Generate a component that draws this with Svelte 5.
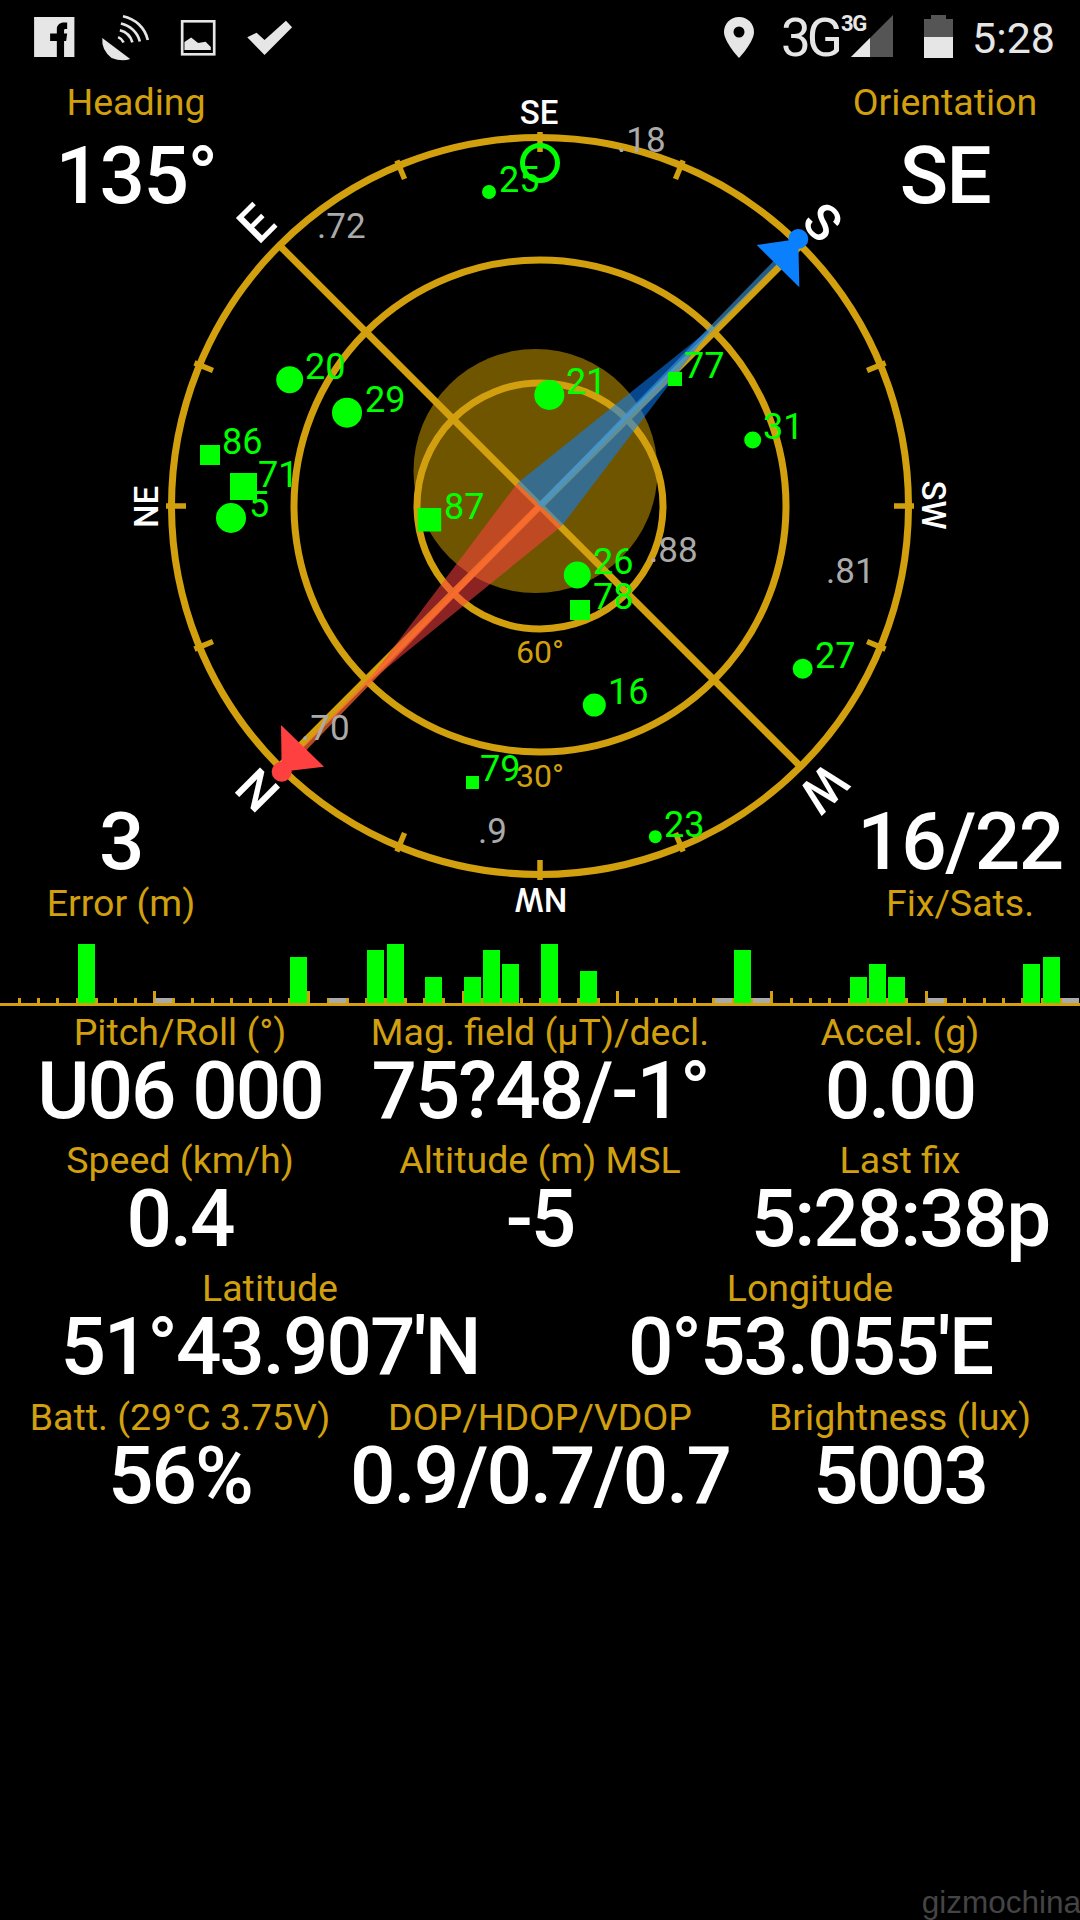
<script>
  const cx = 540, cy = 506;
  const cards = [
    { t: 'SE', a: 0, small: true }, { t: 'S', a: 45 }, { t: 'SW', a: 90, small: true }, { t: 'W', a: 135 },
    { t: 'NW', a: 180, small: true }, { t: 'N', a: 225 }, { t: 'NE', a: 270, small: true }, { t: 'E', a: 315 }
  ];
  const ticks = [0, 22.5, 67.5, 90, 112.5, 157.5, 180, 202.5, 247.5, 270, 292.5, 337.5];
  const dots = [
    [489, 192, 7, '25', 499, 192], [289.7, 379.7, 13.5, '20', 305, 379], [347, 412.7, 15, '29', 365, 412],
    [231, 518, 15, '5', 249, 517], [549.3, 395, 15, '21', 566, 394], [752.7, 440, 8.5, '31', 763, 439],
    [577.3, 575, 13.5, '26', 593, 574], [802.7, 668.7, 10, '27', 815, 668], [594.3, 705, 11.5, '16', 608, 704],
    [655.3, 836.7, 6.5, '23', 664, 836.7]
  ];
  const squares = [
    [200, 445, 20, '86', 222, 454], [230, 473, 27, '71', 258, 487], [417.7, 508, 23.5, '87', 444, 519],
    [668, 372, 14, '77', 684, 378], [570, 600, 20, '78', 593, 609], [466, 776, 13, '79', 480, 781]
  ];
  const grey = [
    ['.72', 317, 238], ['.18', 617, 152], ['.88', 649, 562], ['.81', 826, 583], ['.70', 301, 740], ['.9', 478, 843]
  ];
  const green = { 4: 59, 15: 46, 19: 53, 20: 59, 22: 26, 24: 26, 25: 53, 26: 39, 28: 59, 30: 32, 38: 53, 44: 26, 45: 39, 46: 26, 53: 39, 54: 46 };
  const greyBars = [8, 17, 37, 39, 48, 55];
  const slots = Array.from({ length: 56 }, (_, k) => ({
    k, h: green[k] || 0, grey: greyBars.includes(k), major: k > 0 && k % 8 === 0
  }));
  const rows = [
    [['Pitch/Roll (°)', 'U06 000'], ['Mag. field (µT)/decl.', '75?48/-1°'], ['Accel. (g)', '0.00']],
    [['Speed (km/h)', '0.4'], ['Altitude (m) MSL', '-5'], ['Last fix', '5:28:38p']],
    [['Latitude', "51°43.907'N"], ['Longitude', "0°53.055'E"]],
    [['Batt. (29°C 3.75V)', '56%'], ['DOP/HDOP/VDOP', '0.9/0.7/0.7'], ['Brightness (lux)', '5003']]
  ];
</script>

<div class="screen">
  <header class="status">
    <svg class="left-icons" width="310" height="64" viewBox="0 0 300 64" preserveAspectRatio="none">
      <rect x="33" y="17" width="39" height="40" fill="#e6e6e6" />
      <path d="M55 57V41H48.5V33.5H55V29C55 25 58 22.5 62 22.500H65V29H63C62 29 62 30 62 31V33.500H65L64 41H62V57Z" fill="#000" />
      <g fill="none" stroke="#e6e6e6" stroke-width="2.6">
        <path d="M114.300 37.100A10 10 0 0 1 119.600 42.400" />
        <path d="M116 30.300A17 17 0 0 1 128.100 42.400" />
        <path d="M117 23.500A24 24 0 0 1 135.300 41.500" />
        <path d="M119 16.200A31 31 0 0 1 143 40" />
      </g>
      <path d="M99 38L126 59Q118 62 108 58Q98 50 99 38Z" fill="#e6e6e6" />
      <rect x="176.300" y="21.300" width="31" height="33" fill="none" stroke="#e6e6e6" stroke-width="2.600" />
      <path d="M178.500 50V42L185 37.500L191.700 43L199 41.700L204 47V50Z" fill="#e6e6e6" />
      <path d="M239.300 37.300L248.300 32.700L256 40L276.700 20.700L282.700 27.300L256 55Z" fill="#e6e6e6" />
    </svg>
    <div class="right-icons">
      <svg class="pin" width="30" height="41" viewBox="0 0 30 41">
        <path d="M15 0C6 0 0 7 0 15C0 25 15 41 15 41C15 41 30 25 30 15C30 7 24 0 15 0Z" fill="#e6e6e6" />
        <circle cx="15" cy="15" r="5.500" fill="#000" />
      </svg>
      <span class="net">3G</span>
      <div class="signal">
        <span class="net-small">3G</span>
        <svg width="42" height="42" viewBox="0 0 42 42">
          <path d="M0 42L42 0V42Z" fill="#555" />
          <path d="M0 42L19 23V42Z" fill="#e6e6e6" />
        </svg>
      </div>
      <svg class="battery" width="29" height="43" viewBox="0 0 29 43">
        <path d="M7 0H22V4H29V22H0V4H7Z" fill="#555" />
        <rect y="22" width="29" height="21" fill="#e6e6e6" />
      </svg>
      <span class="time">5:28</span>
    </div>
  </header>

  <section class="compass">
    <svg class="dial" width="1080" height="866" viewBox="0 64 1080 866">
      <circle cx="535.500" cy="471" r="122" fill="#6f5500" />
      <g fill="none" stroke="#d2a00e" stroke-width="7">
        <circle cx={cx} cy={cy} r="368.500" />
        <circle cx={cx} cy={cy} r="246" />
        <circle cx={cx} cy={cy} r="123" />
      </g>
      <g stroke="#d2a00e" stroke-width="7">
        <line x1="279" y1="245" x2="801" y2="767" />
        <line x1="279" y1="767" x2="801" y2="245" />
      </g>
      <g stroke="#d2a00e" stroke-width="5.500">
        {#each ticks as a}
          <line x1={cx} y1="132" x2={cx} y2="152" transform="rotate({a} {cx} {cy})" />
        {/each}
      </g>

      <path d="M517.300 483.300L561.700 526L713.500 326Z" fill="#0a80ff" fill-opacity="0.55" />
      <path d="M517.300 483.300L561.700 526L365 685.500Z" fill="#ff4040" fill-opacity="0.55" />
      <line x1="539.500" y1="506" x2="778" y2="260" stroke="#3c9ae0" stroke-width="5" stroke-opacity="0.6" />
      <line x1="539.500" y1="506" x2="300" y2="753" stroke="#ff6a30" stroke-width="5" stroke-opacity="0.7" />
      <path d="M756.700 245L799.300 287.300L798.300 239Z" fill="#0a80ff" />
      <circle cx="798.300" cy="239" r="10" fill="#0a80ff" />
      <path d="M281 725L324 766.700L281.700 771.700Z" fill="#ff4040" />
      <circle cx="281.700" cy="771.700" r="10" fill="#ff4040" />

      {#each cards as c}
        <text class={c.small ? 'card small' : 'card'} x={cx - 1} y={c.small ? 124 : 123} text-anchor="middle" transform="rotate({c.a} {cx} {cy})">{c.t}</text>
      {/each}

      <circle cx="540" cy="163" r="17.500" fill="none" stroke="#00ff00" stroke-width="5" />
      {#each dots as d}
        <circle cx={d[0]} cy={d[1]} r={d[2]} fill="#00ff00" />
        <text class="sat" x={d[4]} y={d[5]}>{d[3]}</text>
      {/each}
      {#each squares as s}
        <rect x={s[0]} y={s[1]} width={s[2]} height={s[2]} fill="#00ff00" />
        <text class="sat" x={s[4]} y={s[5]}>{s[3]}</text>
      {/each}
      {#each grey as g}
        <text class="dim" x={g[1]} y={g[2]}>{g[0]}</text>
      {/each}
      <text class="deg" x="540" y="663" text-anchor="middle">60°</text>
      <text class="deg" x="540" y="787" text-anchor="middle">30°</text>
    </svg>

    <div class="corner top heading"><span class="label">Heading</span><span class="big">135°</span></div>
    <div class="corner top orient"><span class="label">Orientation</span><span class="big">SE</span></div>
    <div class="corner bottom error"><span class="big">3</span><span class="label">Error (m)</span></div>
    <div class="corner bottom fix"><span class="big">16/22</span><span class="label">Fix/Sats.</span></div>
  </section>

  <section class="bars">
    {#each slots as s}
      <div class="slot">
        {#if s.k > 0}<i class={s.major ? 'tick major' : 'tick'}></i>{/if}
        {#if s.grey}<b class="bar off"></b>{/if}
        {#if s.h}<b class="bar on" style="height:{s.h}px"></b>{/if}
      </div>
    {/each}
  </section>

  <section class="data">
    {#each rows as row}
      <div class="row">
        {#each row as cell}
          <div class="cell">
            <span class="label">{cell[0]}</span>
            <span class="value">{cell[1]}</span>
          </div>
        {/each}
      </div>
    {/each}
  </section>

  <span class="mark">gizmochina</span>
</div>

<style>
  :global(body) { background: #000; }
  .screen {
    position: relative;
    width: 1080px;
    height: 1920px;
    background: #000;
    overflow: hidden;
    font-family: Roboto, "Liberation Sans", sans-serif;
  }
  .status {
    height: 64px;
    display: flex;
    justify-content: space-between;
    align-items: flex-start;
  }
  .left-icons { display: block; }
  .right-icons {
    display: flex;
    align-items: flex-start;
    padding: 15px 25px 0 0;
    color: #e6e6e6;
  }
  .pin { margin: 2px 27px 0 0; }
  .net {
    width: 60px;
    font-size: 53px;
    font-weight: 400;
    line-height: 46px;
    letter-spacing: -4px;
  }
  .signal { position: relative; width: 52px; height: 42px; display: flex; justify-content: flex-end; }
  .net-small {
    position: absolute;
    left: 0;
    top: -4px;
    font-size: 22px;
    font-weight: 700;
    line-height: 26px;
    letter-spacing: -1.500px;
  }
  .battery { margin: 0 19px 0 31px; }
  .time { font-size: 43px; line-height: 46px; }

  .compass { position: relative; height: 866px; }
  .dial { display: block; }
  .dial text { font-family: Roboto, "Liberation Sans", sans-serif; }
  .card { fill: #fff; font-size: 50px; font-weight: 500; }
  .card.small { font-size: 33px; }
  .sat { fill: #00ff00; font-size: 36px; }
  .dim { fill: #aaa; font-size: 35px; }
  .deg { fill: #d2a00e; font-size: 32px; }

  .corner {
    position: absolute;
    display: flex;
    flex-direction: column;
    align-items: center;
  }
  .heading { left: 0; top: 15px; width: 272px; }
  .orient { right: 0; top: 15px; width: 270px; }
  .error { left: 0; bottom: 4px; width: 242px; }
  .fix { right: 0; bottom: 4px; width: 240px; }
  .label { color: #d2a00e; font-size: 37.500px; line-height: 46px; white-space: nowrap; }
  .big {
    color: #fff;
    font-size: 80px;
    font-weight: 500;
    line-height: 76px;
    letter-spacing: -1.500px;
    white-space: nowrap;
  }
  .top .big { margin-top: 13px; }

  .bars {
    height: 73px;
    display: flex;
    align-items: stretch;
    border-bottom: 3px solid #d2a00e;
  }
  .slot { position: relative; flex: 0 0 19.300px; }
  .tick {
    position: absolute;
    left: -1.500px;
    bottom: 0;
    width: 3px;
    height: 5px;
    background: #d2a00e;
  }
  .tick.major { height: 12px; }
  .bar { position: absolute; left: 0.600px; bottom: 0; width: 17px; }
  .bar.on { background: #00ff00; }
  .bar.off { height: 5px; background: #aaaaaa; }

  .data { display: flex; flex-direction: column; }
  .row { height: 128.400px; display: flex; }
  .cell {
    flex: 1 1 0;
    min-width: 0;
    display: flex;
    flex-direction: column;
    align-items: center;
    padding-top: 2.500px;
  }
  .value {
    margin-top: -3px;
    color: #fff;
    font-size: 80px;
    font-weight: 500;
    line-height: 78px;
    letter-spacing: -2px;
    white-space: nowrap;
  }
  .mark {
    position: absolute;
    right: -1px;
    bottom: 0;
    font-family: "Liberation Sans", Arial, sans-serif;
    font-size: 31.500px;
    color: #444;
    line-height: 36px;
  }
</style>
